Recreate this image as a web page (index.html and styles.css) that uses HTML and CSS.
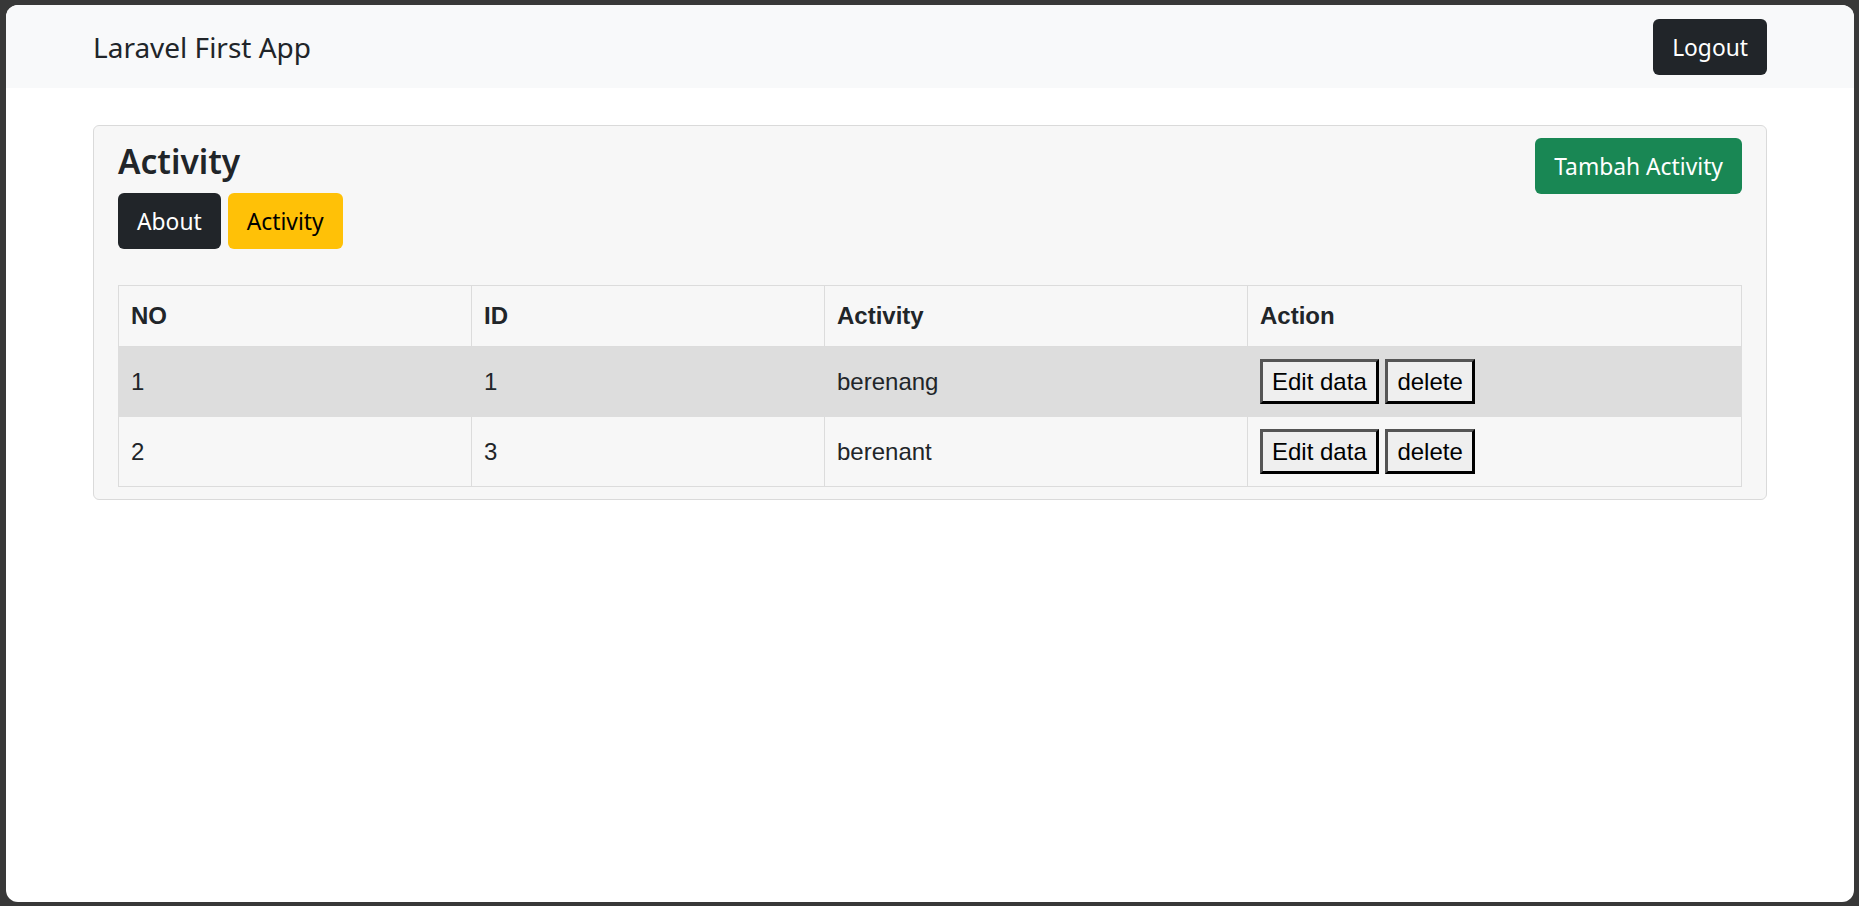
FILE: index.html
```html
<!DOCTYPE html>
<html lang="id">
<head>
<meta charset="utf-8">
<title>Laravel First App</title>
<link rel="stylesheet" href="styles.css">
</head>
<body>
<div class="window">
  <nav class="navbar">
    <div class="container nav-inner">
      <a class="brand" href="#">Laravel First App</a>
      <button class="btn btn-dark" type="button">Logout</button>
    </div>
  </nav>
  <main class="container">
    <div class="card">
      <div class="card-head">
        <div class="head-left">
          <h4 class="title">Activity</h4>
          <div class="tabs">
            <a class="btn btn-dark" href="#">About</a>
            <a class="btn btn-warning" href="#">Activity</a>
          </div>
        </div>
        <a class="btn btn-success" href="#">Tambah Activity</a>
      </div>
      <table class="data-table">
        <colgroup>
          <col class="c-no">
          <col class="c-id">
          <col class="c-act">
          <col class="c-action">
        </colgroup>
        <thead>
          <tr><th>NO</th><th>ID</th><th>Activity</th><th>Action</th></tr>
        </thead>
        <tbody>
          <tr class="stripe">
            <td>1</td><td>1</td><td>berenang</td>
            <td><button class="plain-btn" type="button">Edit data</button> <button class="plain-btn" type="button">delete</button></td>
          </tr>
          <tr>
            <td>2</td><td>3</td><td>berenant</td>
            <td><button class="plain-btn" type="button">Edit data</button> <button class="plain-btn" type="button">delete</button></td>
          </tr>
        </tbody>
      </table>
    </div>
  </main>
</div>
</body>
</html>
```
FILE: styles.css
```css
html, body {
  margin: 0;
  padding: 0;
}
body {
  background: #383838;
  font-family: "Noto Sans", "Open Sans", sans-serif;
  color: #212529;
}
.window {
  margin: 5px 5px 4px 6px;
  height: 897px;
  background: #ffffff;
  border-radius: 12px;
  overflow: hidden;
}
.container {
  width: 1710px;
  box-sizing: border-box;
  padding: 0 18px;
  margin: 0 auto;
}
.navbar {
  background: #f8f9fa;
  padding: 12px 0 11px;
}
.nav-inner {
  display: flex;
  align-items: center;
  justify-content: space-between;
  height: 60px;
}
.brand {
  font-size: 28px;
  color: #212529;
  text-decoration: none;
  line-height: 45px;
}
.btn {
  display: inline-flex;
  align-items: center;
  justify-content: center;
  box-sizing: border-box;
  height: 56px;
  padding: 2px 18px 0;
  border: 1px solid transparent;
  border-radius: 6px;
  font-family: "Noto Sans", "Open Sans", sans-serif;
  font-size: 22.8px;
  line-height: 1;
  text-decoration: none;
  cursor: pointer;
}
.btn-dark {
  background: #212529;
  color: #ffffff;
}
.btn-warning {
  background: #ffc107;
  color: #000000;
}
.btn-success {
  background: #198754;
  color: #ffffff;
}
.card {
  margin-top: 37px;
  background: #f7f7f7;
  border: 1px solid #dadada;
  border-radius: 6px;
  padding: 12px 24px 12px;
}
.card-head {
  display: flex;
  justify-content: space-between;
  align-items: flex-start;
}
.title {
  margin: 0 0 9px;
  font-size: 33.5px;
  font-weight: 600;
  line-height: 46px;
}
.tabs {
  display: flex;
  gap: 7px;
}
.data-table {
  margin-top: 36px;
  width: 100%;
  border-collapse: collapse;
  table-layout: fixed;
  font-family: "Liberation Sans", Arial, sans-serif;
  font-size: 24px;
  line-height: 36px;
  color: #212529;
}
.c-no { width: 353px; }
.c-id { width: 353px; }
.c-act { width: 423px; }
.c-action { width: 494px; }
.data-table th,
.data-table td {
  border: 1px solid #dcdcdc;
  padding: 12px;
  text-align: left;
  vertical-align: middle;
}
.data-table th {
  font-weight: 700;
}
.stripe td {
  background: #dddddd;
  border-color: #dddddd;
}
.plain-btn {
  font-family: "Liberation Sans", Arial, sans-serif;
  font-size: 24px;
  line-height: 27px;
  padding: 6px 9px;
  background: #efefef;
  color: #000000;
  border-style: solid;
  border-width: 3px;
  border-color: #555555 #000000 #000000 #555555;
  margin: 0;
  vertical-align: middle;
}
```
